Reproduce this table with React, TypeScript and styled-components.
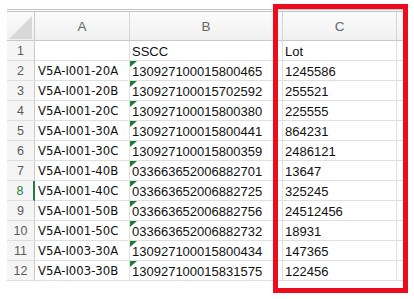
import React from "react";
import styled, { createGlobalStyle } from "styled-components";

const Global = createGlobalStyle`
  html, body { margin: 0; padding: 0; background: #ffffff; }
  body { font-family: "Liberation Sans", Arial, sans-serif; }
`;

const Page = styled.div`
  position: relative;
  width: 414px;
  height: 299px;
  overflow: hidden;
  background: #fff;
`;

const Sheet = styled.div`
  margin: 9px 0 0 7px;
  width: 396px;
  display: grid;
  grid-template-columns: 28px 95px 153px 114px 6px;
  border-top: 3px double #c2c2c2;
`;

const HeadCell = styled.div<{ $last?: boolean }>`
  box-sizing: border-box;
  height: 29px;
  display: flex;
  align-items: center;
  justify-content: center;
  background: linear-gradient(#fbfbfb, #f1f1f1);
  border-bottom: 1px solid #c9c9c9;
  border-right: ${(p) => (p.$last ? "none" : "1px solid #d6d6d6")};
  color: #666666;
  font-size: 13.5px;
  font-family: "Liberation Sans", Arial, sans-serif;
`;

const Corner = styled(HeadCell)`
  align-items: flex-end;
  justify-content: flex-end;
  padding: 0 2px 1px 0;
  border-right: 1px solid #c9c9c9;
`;

const RowNum = styled.div<{ $active?: boolean }>`
  box-sizing: border-box;
  height: 20px;
  display: flex;
  align-items: center;
  justify-content: center;
  padding-top: 1px;
  background: #f5f5f5;
  border-bottom: 1px solid #dedede;
  border-right: ${(p) => (p.$active ? "2px solid #1f7a3c" : "1px solid #c9c9c9")};
  color: ${(p) => (p.$active ? "#1f7a3c" : "#5a5a5a")};
  font-size: 12.5px;
  font-family: "Liberation Sans", Arial, sans-serif;
`;

const Cell = styled.div<{ $kind?: "label" | "num" | "edge" }>`
  position: relative;
  box-sizing: border-box;
  height: 20px;
  line-height: 19px;
  padding: ${(p) => (p.$kind === "label" ? "1px 0 0 3px" : "1px 0 0 2px")};
  border-bottom: 1px solid #e0e0e0;
  border-right: ${(p) => (p.$kind === "edge" ? "none" : "1px solid #e0e0e0")};
  color: #111111;
  white-space: nowrap;
  overflow: hidden;
  font-size: ${(p) => (p.$kind === "label" ? "11.7px" : "13px")};
  font-family: ${(p) =>
    p.$kind === "label"
      ? `"DejaVu Sans", Verdana, sans-serif`
      : `"Liberation Sans", Arial, sans-serif`};
`;

const Flag = styled.span`
  position: absolute;
  left: 0;
  top: 0;
  width: 0;
  height: 0;
  border-top: 6px solid #1d7a35;
  border-right: 7px solid transparent;
`;

const Highlight = styled.div`
  position: absolute;
  left: 273px;
  top: 4px;
  width: 135px;
  height: 289px;
  box-sizing: border-box;
  border: 5px solid #ee0b1d;
  pointer-events: none;
`;

const rows: [string, string, string][] = [
  ["", "SSCC", "Lot"],
  ["V5A-I001-20A", "130927100015800465", "1245586"],
  ["V5A-I001-20B", "130927100015702592", "255521"],
  ["V5A-I001-20C", "130927100015800380", "225555"],
  ["V5A-I001-30A", "130927100015800441", "864231"],
  ["V5A-I001-30C", "130927100015800359", "2486121"],
  ["V5A-I001-40B", "033663652006882701", "13647"],
  ["V5A-I001-40C", "033663652006882725", "325245"],
  ["V5A-I001-50B", "033663652006882756", "24512456"],
  ["V5A-I001-50C", "033663652006882732", "18931"],
  ["V5A-I003-30A", "130927100015800434", "147365"],
  ["V5A-I003-30B", "130927100015831575", "122456"],
];

export default function App() {
  return (
    <Page>
      <Global />
      <Sheet>
        <Corner>
          <svg width="23" height="23" viewBox="0 0 23 23">
            <polygon points="23,0 23,23 0,23" fill="#d8d8d8" />
          </svg>
        </Corner>
        <HeadCell>A</HeadCell>
        <HeadCell>B</HeadCell>
        <HeadCell>C</HeadCell>
        <HeadCell $last />
        {rows.map(([a, b, c], i) => (
          <React.Fragment key={i}>
            <RowNum $active={i + 1 === 8}>{i + 1}</RowNum>
            <Cell $kind="label">{a}</Cell>
            <Cell $kind="num">
              {i > 0 && <Flag />}
              {b}
            </Cell>
            <Cell $kind="num">{c}</Cell>
            <Cell $kind="edge" />
          </React.Fragment>
        ))}
      </Sheet>
      <Highlight />
    </Page>
  );
}
